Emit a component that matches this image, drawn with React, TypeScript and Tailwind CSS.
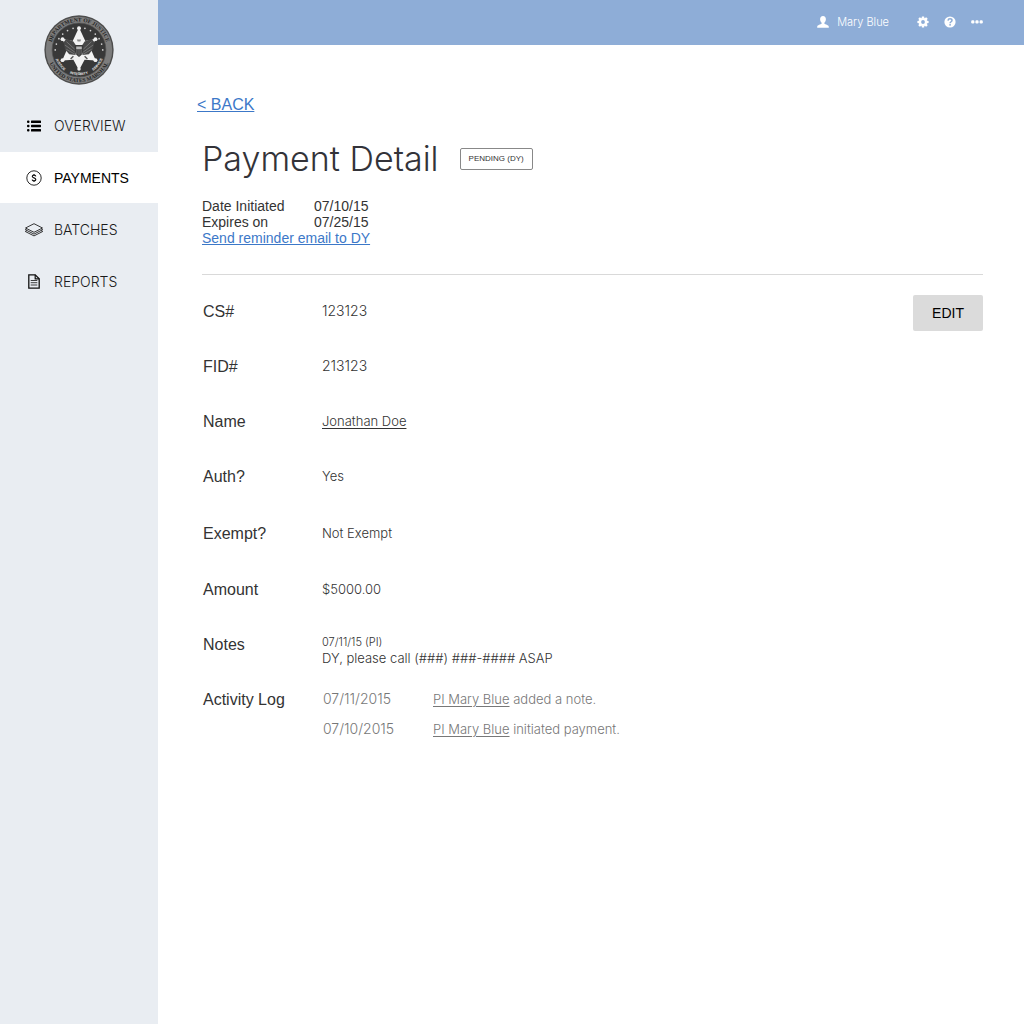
import type { ReactNode } from "react";

const light = "font-['Inter','Liberation_Sans',sans-serif] font-light";

function Seal() {
  const stars = Array.from({ length: 13 }, (_, i) => {
    const a = Math.PI * (1.02 + (i / 12) * 0.96);
    return { x: 50 + 34 * Math.cos(a), y: 52 + 34 * Math.sin(a) };
  });
  return (
    <svg viewBox="0 0 100 100" className="size-[70px]" role="img" aria-label="Department of Justice, United States Marshal">
      <defs>
        <path id="arc-top" d="M 9.5 50 A 40.5 40.5 0 0 1 90.5 50" />
        <path id="arc-bottom" d="M 4 50 A 46 46 0 0 0 96 50" />
        <path id="arc-motto" d="M 14 50 A 36 36 0 0 0 86 50" />
      </defs>
      <circle cx="50" cy="50" r="49.5" fill="#4d4d4d" />
      <circle cx="50" cy="50" r="47.5" fill="#7c7c7c" />
      <circle cx="50" cy="50" r="38.5" fill="#383838" stroke="#555" strokeWidth="1" />
      <g fontFamily="Liberation Serif, serif" fontWeight="700" fontSize="8" fill="#242424" textAnchor="middle">
        <text><textPath href="#arc-top" startOffset="50%">DEPARTMENT OF JUSTICE</textPath></text>
        <text><textPath href="#arc-bottom" startOffset="50%">UNITED STATES MARSHAL</textPath></text>
      </g>
      {stars.map((s, i) => (
        <circle key={i} cx={s.x} cy={s.y} r="1.2" fill="#d4d4d4" />
      ))}
      <path
        d="M50 18 L59 37 L74 34 L67 49 L74 65 L58 64 L50 79 L42 64 L26 65 L33 49 L26 34 L41 37 Z"
        fill="#f2f2f2"
      />
      <g fill="#f2f2f2">
        <circle cx="50" cy="19" r="2.8" />
        <circle cx="26.5" cy="34.5" r="2.8" />
        <circle cx="73.5" cy="34.5" r="2.8" />
        <circle cx="26.5" cy="64.5" r="2.8" />
        <circle cx="73.5" cy="64.5" r="2.8" />
        <circle cx="50" cy="77" r="2.5" />
      </g>
      <path d="M46 44 L42 38 L32 34 L28 39 L30 49 L36 56 L45 57 Z" fill="#474747" />
      <path d="M54 44 L58 38 L68 34 L72 39 L70 49 L64 56 L55 57 Z" fill="#474747" />
      <path d="M32 38 L44 49 M30 43 L44 53 M32 49 L44 56 M68 38 L56 49 M70 43 L56 53 M68 49 L56 56" stroke="#858585" strokeWidth="1" />
      <path d="M47 35 H53 L52 38 H48 Z" fill="#8a8a8a" />
      <path d="M44 43 H56 V51 Q55 57 50 60 Q45 57 44 51 Z" fill="#393939" />
      <path d="M46 45 H54 V49 H46 Z" fill="#b8b8b8" />
      <path d="M47 50 V56 M50 50 V58 M53 50 V56" stroke="#858585" strokeWidth="1" />
      <path d="M42 59 L38 63 M58 59 L62 63" stroke="#555" strokeWidth="2" fill="none" />
      <g fontFamily="Liberation Sans, sans-serif" fontWeight="700" fontSize="5" fill="#efefef" textAnchor="middle">
        <text><textPath href="#arc-motto" startOffset="21%">JUSTICE</textPath></text>
        <text><textPath href="#arc-motto" startOffset="50%">INTEGRITY</textPath></text>
        <text><textPath href="#arc-motto" startOffset="79%">SERVICE</textPath></text>
      </g>
    </svg>
  );
}

function ListIcon() {
  return (
    <svg viewBox="0 0 14 12" className="h-3 w-3.5" fill="#000" aria-hidden="true">
      <rect x="0" y="0.5" width="2.5" height="2.5" rx="1" />
      <rect x="0" y="4.7" width="2.5" height="2.5" rx="1" />
      <rect x="0" y="9" width="2.5" height="2.5" rx="1" />
      <rect x="4" y="0.5" width="10" height="2.5" rx="0.6" />
      <rect x="4" y="4.7" width="10" height="2.5" rx="0.6" />
      <rect x="4" y="9" width="10" height="2.5" rx="0.6" />
    </svg>
  );
}

function DollarIcon() {
  return (
    <svg viewBox="0 0 16 16" className="size-4" fill="none" stroke="#111" aria-hidden="true">
      <circle cx="8" cy="8" r="7.2" strokeWidth="0.9" />
      <path d="M9.8 6.3 C9.6 5.5 9 5.2 8 5.2 C7 5.2 6.3 5.7 6.3 6.5 C6.3 8.2 9.8 7.5 9.8 9.4 C9.8 10.3 9.1 10.8 8 10.8 C7 10.8 6.3 10.4 6.1 9.6 M8 4 V5.5 M8 10.5 V12" strokeWidth="1.2" />
    </svg>
  );
}

function LayersIcon() {
  return (
    <svg viewBox="0 0 20 14" className="h-3.5 w-5" fill="none" stroke="#222" strokeWidth="0.9" aria-hidden="true">
      <path d="M10 0.7 L18.5 5 L10 9.3 L1.5 5 Z" />
      <path d="M2.8 5.9 L1.3 6.7 L10 11.1 L18.7 6.7 L17.2 5.9" />
      <path d="M2.8 7.7 L1.3 8.5 L10 12.9 L18.7 8.5 L17.2 7.7" />
    </svg>
  );
}

function FileIcon() {
  return (
    <svg viewBox="0 0 12 15" className="h-[15px] w-3" fill="none" stroke="#111" aria-hidden="true">
      <path d="M0.8 0.8 H7.2 L11.2 4.8 V14.2 H0.8 Z" strokeWidth="1.3" />
      <path d="M7.2 0.8 V4.8 H11.2" strokeWidth="1.2" />
      <path d="M2.7 6.5 H9.3 M2.7 8.7 H9.3 M2.7 11 H9.3" strokeWidth="0.8" />
    </svg>
  );
}

function UserIcon() {
  return (
    <svg viewBox="0 0 12 12" className="size-3" fill="#fff" aria-hidden="true">
      <path d="M6 0 C7.9 0 8.9 1.3 8.9 3.2 C8.9 4.7 8.2 6 7.4 6.7 V7.8 C8.3 8.5 11.6 9 11.8 10.7 V11.8 H0.2 V10.7 C0.4 9 3.7 8.5 4.6 7.8 V6.7 C3.8 6 3.1 4.7 3.1 3.2 C3.1 1.3 4.1 0 6 0 Z" />
    </svg>
  );
}

function GearIcon() {
  return (
    <svg viewBox="0 0 12 12" className="size-3" aria-hidden="true">
      <g fill="#fff">
        <path d="M4.9 0.4 H7.1 L7.5 2.6 H4.5 Z M4.9 11.6 H7.1 L7.5 9.4 H4.5 Z" />
        <path d="M0.4 4.9 V7.1 L2.6 7.5 V4.5 Z M11.6 4.9 V7.1 L9.4 7.5 V4.5 Z" />
        <path d="M1.3 2.8 L2.8 1.3 L4.8 2.6 L2.6 4.8 Z M10.7 2.8 L9.2 1.3 L7.2 2.6 L9.4 4.8 Z" />
        <path d="M1.3 9.2 L2.8 10.7 L4.8 9.4 L2.6 7.2 Z M10.7 9.2 L9.2 10.7 L7.2 9.4 L9.4 7.2 Z" />
      </g>
      <circle cx="6" cy="6" r="3" fill="none" stroke="#fff" strokeWidth="2.2" />
    </svg>
  );
}

function HelpIcon() {
  return (
    <svg viewBox="0 0 12 12" className="size-3" fill="none" aria-hidden="true">
      <circle cx="6" cy="6" r="5.6" fill="#fff" />
      <path d="M4 4.6 C4.1 3.3 4.9 2.8 6 2.8 C7.2 2.8 8 3.4 8 4.4 C8 5.8 6.1 5.7 6.1 7.3" stroke="#8eadd7" strokeWidth="1.5" />
      <rect x="5.3" y="8.1" width="1.6" height="1.5" fill="#8eadd7" />
    </svg>
  );
}

function DotsIcon() {
  return (
    <svg viewBox="0 0 12 12" className="size-3" fill="#fff" aria-hidden="true">
      <rect x="0.2" y="4.3" width="3.2" height="3.2" rx="1.2" />
      <rect x="4.4" y="4.3" width="3.2" height="3.2" rx="1.2" />
      <rect x="8.6" y="4.3" width="3.2" height="3.2" rx="1.2" />
    </svg>
  );
}

function NavItem({ icon, label, active = false }: { icon: ReactNode; label: string; active?: boolean }) {
  return (
    <a
      href="#"
      aria-current={active ? "page" : undefined}
      className={`flex h-[51px] items-center gap-2.5 pl-6 text-sm ${
        active ? "bg-white text-black" : "text-[#1a1a1a]"
      }`}
    >
      <span className="flex w-5 justify-center">{icon}</span>
      <span className={active ? "" : light}>{label}</span>
    </a>
  );
}

function Row({
  label,
  height = "h-[55px]",
  size = "text-[13px]",
  children,
}: {
  label: string;
  height?: string;
  size?: string;
  children: ReactNode;
}) {
  return (
    <div className={`flex ${height}`}>
      <dt className="w-[119px] shrink-0 text-base leading-[26px] text-[#333]">{label}</dt>
      <dd className={`${light} ${size} leading-6 text-[#333]`}>{children}</dd>
    </div>
  );
}

function LogEntry({ date, action }: { date: string; action: string }) {
  return (
    <li className="flex leading-6">
      <time className="w-[110px] text-sm leading-6">{date}</time>
      <span>
        <a href="#" className="underline underline-offset-2">PI Mary Blue</a> {action}
      </span>
    </li>
  );
}

export default function App() {
  return (
    <div className="flex min-h-screen bg-white font-['Liberation_Sans',Arial,sans-serif] text-[#333]">
      <aside className="w-[158px] shrink-0 bg-[#e9edf2]">
        <div className="flex h-[100px] justify-center pt-[15px]">
          <Seal />
        </div>
        <nav className="flex flex-col gap-px">
          <NavItem icon={<ListIcon />} label="OVERVIEW" />
          <NavItem icon={<DollarIcon />} label="PAYMENTS" active />
          <NavItem icon={<LayersIcon />} label="BATCHES" />
          <NavItem icon={<FileIcon />} label="REPORTS" />
        </nav>
      </aside>

      <div className="min-w-0 flex-1">
        <header className="flex h-[45px] items-center justify-end bg-[#8eadd7] pr-[41px] pb-px text-white">
          <button type="button" className="flex items-center gap-2">
            <UserIcon />
            <span className={`${light} text-[11px]`}>Mary Blue</span>
          </button>
          <div className="ml-7 flex items-center gap-[15px]">
            <button type="button" aria-label="Settings"><GearIcon /></button>
            <button type="button" aria-label="Help"><HelpIcon /></button>
            <button type="button" aria-label="More"><DotsIcon /></button>
          </div>
        </header>

        <main className="pt-12 pr-[41px] pl-11">
          <a href="#" className="-ml-[5px] inline-block text-base leading-6 text-[#3c78c8] underline underline-offset-1">&lt; BACK</a>

          <div className="mt-5 flex items-center gap-[21px]">
            <h1 className={`${light} text-[34px] leading-[44px] text-[#333339]`}>Payment Detail</h1>
            <span className="rounded-xs border border-[#888] px-2 text-[8px] leading-5 text-[#333]">PENDING (DY)</span>
          </div>

          <dl className="mt-[17px] grid w-fit grid-cols-[112px_auto] text-sm leading-4">
            <dt>Date Initiated</dt>
            <dd>07/10/15</dd>
            <dt>Expires on</dt>
            <dd>07/25/15</dd>
          </dl>
          <a href="#" className="block w-fit text-sm leading-4 text-[#3c78c8] underline">Send reminder email to DY</a>

          <div className="mt-7 flex items-start justify-between border-t border-[#d9d9d9] pt-5">
            <dl className="mt-1 pl-px">
              <Row label="CS#" size="text-sm">123123</Row>
              <Row label="FID#" size="text-sm">213123</Row>
              <Row label="Name">
                <a href="#" className="underline underline-offset-2">Jonathan Doe</a>
              </Row>
              <Row label="Auth?" height="h-[57px]">Yes</Row>
              <Row label="Exempt?" height="h-14">Not Exempt</Row>
              <Row label="Amount">$5000.00</Row>
              <Row label="Notes">
                <p className="pt-0.5 text-[11px] leading-4">07/11/15 (PI)</p>
                <p className="leading-4">DY, please call (###) ###-#### ASAP</p>
              </Row>
              <Row label="Activity Log" height="min-h-[55px]">
                <ul className="flex flex-col gap-1.5 pl-px text-[#777]">
                  <LogEntry date="07/11/2015" action="added a note." />
                  <LogEntry date="07/10/2015" action="initiated payment." />
                </ul>
              </Row>
            </dl>
            <button type="button" className="h-9 w-[70px] rounded-xs bg-[#dbdbdb] text-sm text-black">EDIT</button>
          </div>
        </main>
      </div>
    </div>
  );
}
